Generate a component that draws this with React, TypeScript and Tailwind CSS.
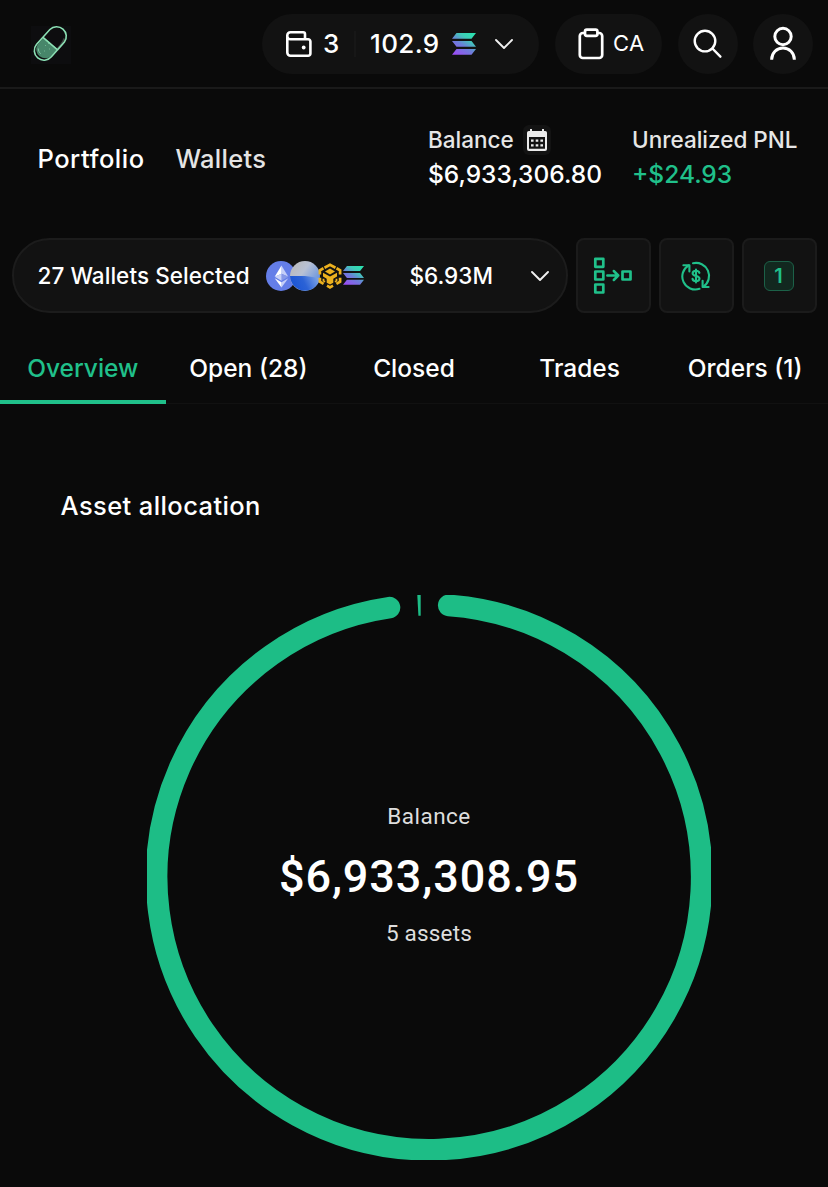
import React from 'react';

interface IconProps {
  className?: string;
}

interface Tab {
  label: string;
  active?: boolean;
}

const tabs: Tab[] = [
  { label: 'Overview', active: true },
  { label: 'Open (28)' },
  { label: 'Closed' },
  { label: 'Trades' },
  { label: 'Orders (1)' }
];

const PillLogo = () => (
  <svg className="size-10" viewBox="0 0 40 40" fill="none">
    <rect width="40" height="38" y="1" fill="#0d0d0f" />
    <path d="M12.6 12.6 26.5 24.2 20.5 31.1A9.2 9.2 0 0 1 6.6 19.4Z" fill="#47866a" />
    <path d="M33.5 13.5c-.4 4-3 6.5-7.5 11.5" stroke="#3c4541" strokeWidth="2.6" />
    <path
      d="M5.6 19.3 18.9 4.5A9.6 9.6 0 0 1 33.4 17L20.4 31.8A9.6 9.6 0 0 1 5.6 19.3ZM12 12.4l14.6 12.5"
      stroke="#8be0b4"
      strokeWidth="1.6"
    />
    <path d="M7.3 23.5c0 2 .9 4 2.4 5.2M14 20.5h.7M17 18.5h.7M18 24h.7M13 26h.7" stroke="#82c9a4" strokeWidth="1" />
  </svg>
);

const WalletIcon = () => (
  <svg className="h-7 w-7" viewBox="0 0 28 28" fill="none" stroke="#fff" strokeWidth="2.6" strokeLinejoin="round">
    <path d="M20 9.3V4a1.8 1.8 0 0 0-1.8-1.8H5.5A3.2 3.2 0 0 0 2.3 5.5v17a3.2 3.2 0 0 0 3.2 3.2h17.6a2.3 2.3 0 0 0 2.3-2.3V11.6a2.3 2.3 0 0 0-2.3-2.3H5.5A3.2 3.2 0 0 1 2.3 6" />
    <circle cx="18.7" cy="17.5" r="1.9" fill="#fff" stroke="none" />
  </svg>
);

const SolanaIcon = ({ className }: IconProps) => (
  <svg className={className} viewBox="0 0 24 22" preserveAspectRatio="none">
    <defs>
      <linearGradient id="sol" x1="4" y1="22" x2="19" y2="0" gradientUnits="userSpaceOnUse">
        <stop offset="0" stopColor="#9b4df5" />
        <stop offset=".45" stopColor="#6a80d8" />
        <stop offset=".75" stopColor="#3fcbb8" />
        <stop offset="1" stopColor="#2ce0b0" />
      </linearGradient>
    </defs>
    <path d="M4.5 0H24l-4.5 5.8H0ZM0 8h19.5L24 13.8H4.5ZM4.5 16H24l-4.5 5.8H0Z" fill="url(#sol)" />
  </svg>
);

const ChevronDown = () => (
  <svg className="h-3 w-[18px] shrink-0" viewBox="0 0 18 12" fill="none" stroke="#f0f0f0" strokeWidth="1.9">
    <path d="m1 2 8 8 8-8" strokeLinecap="round" strokeLinejoin="round" />
  </svg>
);

const ClipboardIcon = () => (
  <svg className="h-8 w-[26px]" viewBox="0 0 26 32" fill="none" stroke="#fff" strokeWidth="2.7">
    <rect x="1.8" y="5" width="22.4" height="25" rx="3" />
    <rect x="7" y="1.6" width="12.4" height="6.2" rx="1.8" fill="#121212" />
  </svg>
);

const SearchIcon = () => (
  <svg className="h-[30px] w-[30px]" viewBox="0 0 30 30" fill="none" stroke="#fff" strokeWidth="2.4" strokeLinecap="round">
    <circle cx="12" cy="12.1" r="10.3" />
    <path d="m19.4 19.5 8 8.2" />
  </svg>
);

const UserIcon = () => (
  <svg className="h-9 w-7" viewBox="0 0 28 36" fill="none" stroke="#fff" strokeWidth="3">
    <circle cx="14" cy="10.5" r="8.2" />
    <path d="M2.7 33.7v-.4a11.3 11.3 0 0 1 22.6 0v.4" />
  </svg>
);

const CalendarIcon = () => (
  <svg className="h-[22px] w-[22px]" viewBox="0 0 22 22" fill="#ebebeb">
    <path
      d="M4 0h2v2h10V0h2v2h1.2A1.8 1.8 0 0 1 21 3.8V20a2 2 0 0 1-2 2H3a2 2 0 0 1-2-2V3.8A1.8 1.8 0 0 1 2.8 2H4ZM3 8v11.8h16V8Z"
      fillRule="evenodd"
    />
    <path d="M5 10.5h2.6v2.3H5ZM9.7 10.5h2.6v2.3H9.7ZM14.4 10.5H17v2.3h-2.6ZM5 15.2h2.6v2.3H5ZM9.7 15.2h2.6v2.3H9.7ZM14.4 15.2H17v2.3h-2.6Z" />
  </svg>
);

const EthIcon = () => (
  <svg className="size-[30px]" viewBox="0 0 30 30">
    <circle cx="15" cy="15" r="15" fill="#647ee8" />
    <path d="M15.5 4.5v8.2l6.8 3Z" fill="#c4cef8" />
    <path d="M15.5 4.5 8.7 15.7l6.8-3Z" fill="#fff" />
    <path d="M15.5 12.7v7l6.8-4Z" fill="#8799e8" />
    <path d="m8.7 15.7 6.8 4v-7Z" fill="#c9d2f8" />
    <path d="M15.5 21.2v5.3l6.8-9.3Z" fill="#c4cef8" />
    <path d="M15.5 26.5v-5.3l-6.8-4Z" fill="#fff" />
  </svg>
);

const BaseIcon = () => (
  <svg className="-ml-1.5 size-[30px]" viewBox="0 0 30 30">
    <defs>
      <linearGradient id="baseTop" x1="3" y1="3" x2="26" y2="20" gradientUnits="userSpaceOnUse">
        <stop offset="0" stopColor="#b9b9bb" />
        <stop offset=".45" stopColor="#b8c1d4" />
        <stop offset="1" stopColor="#6d97e0" />
      </linearGradient>
      <linearGradient id="baseBottom" x1="3" y1="26" x2="27" y2="14" gradientUnits="userSpaceOnUse">
        <stop offset="0" stopColor="#1b55d4" />
        <stop offset=".45" stopColor="#2b62d6" />
        <stop offset="1" stopColor="#7fa5e6" />
      </linearGradient>
    </defs>
    <circle cx="15" cy="15" r="15" fill="url(#baseTop)" />
    <path d="M0 15h15l14.8 2A15 15 0 0 1 0 15Z" fill="url(#baseBottom)" />
  </svg>
);

const BnbIcon = () => (
  <svg className="-ml-0.5 h-[26px] w-6" viewBox="0 0 24 26" fill="none" stroke="#edb11e" strokeWidth="2.7">
    <path d="m6.5 4.8L12 1.8l5.500 3M18.500 5.300l3.600 2v4.200M22.100 14.800v3.900l-3.700 2.200M5.600 20.900l-3.700-2.200v-3.900M1.900 11.500V7.300l3.600-2M9 22.700l3 1.700 3-1.700" />
    <path d="m7 8.5 5-2.9 5 2.9-5 2.9Z" fill="#edb11e" stroke="none" />
    <path d="m5 9.8 7 3.8 7-3.8v3.7l-3.7 2.2v4L12 21.6l-3.3-1.9v-4L5 13.5Z" fill="#edb11e" stroke="none" />
    <path d="M5.5 15.8v2l1.6 1M18.5 15.8v2l-1.6 1" strokeWidth="1.8" />
  </svg>
);

const MergeIcon = () => (
  <svg className="h-10 w-10" viewBox="0 0 40 40" fill="none" stroke="#20c08a" strokeWidth="2.7" strokeLinejoin="round">
    <rect x="2.3" y="2.8" width="8" height="8" />
    <rect x="2.3" y="15.5" width="8" height="8" />
    <rect x="2.3" y="28.5" width="8" height="8" />
    <rect x="29.5" y="15.5" width="8" height="8" />
    <path d="M14.3 19.500h11M20.800 15l4.500 4.500-4.500 4.500" strokeWidth="2.5" strokeLinecap="round" />
  </svg>
);

const CycleIcon = () => (
  <svg className="h-[30px] w-[30px]" viewBox="0 0 30 30" fill="none" stroke="#20c08a" strokeWidth="2.1" strokeLinecap="round" strokeLinejoin="round">
    <path d="M12 2.300A13 13 0 0 1 22.500 25.600" />
    <path d="M18.500 27.800A13 13 0 0 1 7.700 4.300" />
    <path d="M2.400 4.200h6v6.200M27.600 26h-6v-6.200" />
    <path d="M18.400 11.800c-.5-1.500-1.700-2.100-3.400-2.100-2 0-3.400 1-3.400 2.600 0 3.800 6.900 1.600 6.900 5.300 0 1.700-1.400 2.600-3.500 2.600-1.900 0-3.200-.8-3.500-2.400M15 8.500v13" />
  </svg>
);

function Header() {
  return (
    <header className="flex h-[89px] items-start border-b-2 border-[#1a1a1a] pl-[31px] pt-3.5 pr-[15px]">
      <div className="mt-[11px]">
        <PillLogo />
      </div>
      <div className="ml-auto flex items-center text-white">
        <div className="flex h-[60px] w-[277px] items-center rounded-full bg-[#121212] pl-[23px]">
          <WalletIcon />
          <span className="ml-2.5 w-[17px] pb-px text-[26px] font-medium">3</span>
          <span className="ml-3.5 h-[26px] w-0.5 bg-[#171717]" />
          <span className="ml-3.5 w-[71px] pb-px text-[26px] font-medium tracking-[0.4px] whitespace-nowrap">102.9</span>
          <SolanaIcon className="ml-[11px] h-[22px] w-6" />
          <div className="ml-[19px]">
            <ChevronDown />
          </div>
        </div>
        <div className="ml-4 flex h-[60px] w-[107px] items-center rounded-full bg-[#121212] pl-[23px]">
          <ClipboardIcon />
          <span className="ml-[9px] pb-px text-[22px] tracking-[0.4px]">CA</span>
        </div>
        <div className="ml-4 flex size-[60px] items-center justify-center rounded-full bg-[#121212]">
          <SearchIcon />
        </div>
        <div className="ml-[15px] flex size-[60px] items-center justify-center rounded-full bg-[#121212]">
          <UserIcon />
        </div>
      </div>
    </header>
  );
}

function Summary() {
  return (
    <section className="flex h-[149px] pl-[37.5px]">
      <div className="flex w-[390.5px] gap-[31px] pt-[54px] text-[25.5px] leading-8 font-medium">
        <span className="tracking-[0.5px] text-white">Portfolio</span>
        <span className="tracking-[0.3px] text-[#e4e4e4]">Wallets</span>
      </div>
      <div className="w-[204px] pt-[35px]">
        <div className="flex h-8 items-center gap-[9px] text-[22.5px] text-[#e6e6e6]">
          <span className="font-medium">Balance</span>
          <span className="flex h-[30px] w-7 items-center justify-center rounded-md bg-[#131313]">
            <CalendarIcon />
          </span>
        </div>
        <div className="mt-0.5 text-[24.5px] leading-8 font-medium text-white">$6,933,306.80</div>
      </div>
      <div className="pt-[35px]">
        <div className="text-[22.5px] leading-8 font-medium whitespace-nowrap text-[#e6e6e6]">Unrealized PNL</div>
        <div className="mt-0.5 text-[24.5px] leading-8 font-medium text-[#20c08a]">+$24.93</div>
      </div>
    </section>
  );
}

function WalletBar() {
  const square = 'flex h-[75px] w-[75px] items-center justify-center rounded-lg border-2 border-[#1b1b1b] bg-[#121212]';
  return (
    <section className="flex gap-2 pl-[11.5px]">
      <div className="flex h-[75px] w-[556px] items-center rounded-full border-2 border-[#1c1c1c] bg-[#121212] pl-6 text-white">
        <span className="w-[228px] text-[22.5px] font-medium tracking-[0.06px] whitespace-nowrap">27 Wallets Selected</span>
        <div className="flex w-[144px] items-center">
          <EthIcon />
          <BaseIcon />
          <BnbIcon />
          <SolanaIcon className="ml-px h-[19px] w-[21px]" />
        </div>
        <span className="w-[121px] text-[22.5px] font-medium">$6.93M</span>
        <ChevronDown />
      </div>
      <div className={square}>
        <MergeIcon />
      </div>
      <div className={square}>
        <CycleIcon />
      </div>
      <div className={square}>
        <span className="mr-px flex size-[30px] items-center justify-center rounded-md border-[1.5px] border-[#1c6148] bg-[#12281f] text-[20px] font-semibold text-[#20c08a]">
          1
        </span>
      </div>
    </section>
  );
}

function Tabs() {
  return (
    <nav className="grid h-[91px] grid-cols-5 text-[24.5px] font-medium shadow-[inset_0_-1px_0_#111111]">
      {tabs.map((tab) => (
        <div
          key={tab.label}
          className={
            tab.active
              ? 'border-b-4 border-[#20c08a] pt-[39px] text-center leading-8 text-[#20c08a]'
              : 'pt-[39px] text-center leading-8 text-white'
          }
        >
          {tab.label}
        </div>
      ))}
    </nav>
  );
}

// Donut chart: one dominant asset plus a sliver for the rest
function Allocation() {
  return (
    <section className="pt-[86px]">
      <h2 className="pl-[60.5px] text-[25.5px] leading-8 font-medium tracking-[0.4px] text-white">Asset allocation</h2>
      <div className="mt-[73px] ml-[147px] grid h-[565px] w-[564px]">
        <svg className="col-start-1 row-start-1 h-[565px] w-[564px] overflow-hidden" viewBox="0 0 564 565" fill="none">
          <path
            d="M301.7 10.4A272.5 272.5 0 1 1 242.5 12.600"
            stroke="#1dbd86"
            strokeWidth="21.600"
            strokeLinecap="round"
          />
          <path d="M270.300 0h3.400v20.800h-2.300Z" fill="#1dbd86" />
        </svg>
        <div className="col-start-1 row-start-1 flex flex-col items-center pt-[205px] font-['Roboto']">
          <span className="text-[22.5px] leading-8 tracking-[0.5px] text-[#dedede]">Balance</span>
          <span className="mt-[17px] text-[45px] leading-[56px] font-medium tracking-[0.9px] text-white">$6,933,308.95</span>
          <span className="mt-3 text-[22.5px] leading-8 tracking-[0.2px] text-[#dedede]">5 assets</span>
        </div>
      </div>
    </section>
  );
}

export default function App() {
  return (
    <main className="h-[1187px] w-[828px] overflow-hidden bg-[#0a0a0a] font-['Inter',sans-serif]">
      <Header />
      <Summary />
      <WalletBar />
      <Tabs />
      <Allocation />
    </main>
  );
}
